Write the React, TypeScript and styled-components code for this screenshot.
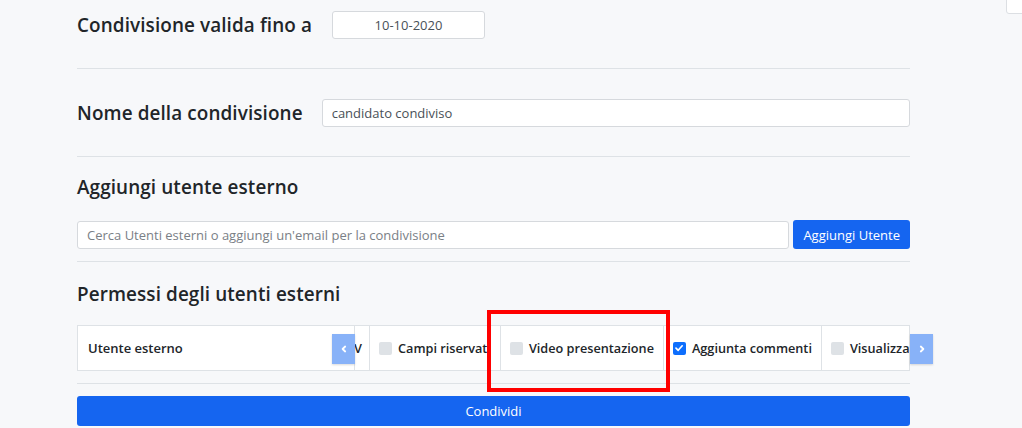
import * as React from "react";
import styled, { createGlobalStyle } from "styled-components";

const GlobalStyle = createGlobalStyle`
  html, body {
    margin: 0;
    padding: 0;
    background: #f7f8fa;
    font-family: "Open Sans", "Liberation Sans", sans-serif;
    color: #212529;
  }
`;

/// Styles

const Page = styled.div`
  position: relative;
  width: 1022px;
  height: 428px;
  overflow: hidden;
  box-sizing: border-box;
  padding: 0 112px 0 77px;
`;

const Section = styled.div<{ $top: number; $bottom: number; $last?: boolean }>`
  display: flex;
  flex-direction: column;
  padding-top: ${p => p.$top}px;
  padding-bottom: ${p => p.$bottom}px;
  border-bottom: ${p => (p.$last ? "none" : "1px solid #dee2e6")};
`;

const Row = styled.div<{ $gap: number; $top?: number }>`
  display: flex;
  align-items: center;
  gap: ${p => p.$gap}px;
  margin-top: ${p => p.$top || 0}px;
`;

const Heading = styled.h2`
  margin: 0;
  font-size: 18.9px;
  font-weight: 600;
  line-height: 27px;
  white-space: nowrap;
  letter-spacing: 0.1px;
`;

const Input = styled.input<{ $width?: number; $center?: boolean }>`
  box-sizing: border-box;
  height: 28px;
  ${p => (p.$width ? `width: ${p.$width}px;` : "flex: 1;")}
  min-width: 0;
  padding: 0 9px;
  border: 1px solid #d6d9dd;
  border-radius: 3px;
  background: #fff;
  font-family: inherit;
  font-size: 13px;
  color: #495057;
  text-align: ${p => (p.$center ? "center" : "left")};
  &::placeholder {
    color: #7a8086;
  }
`;

const BlueButton = styled.button<{ $full?: boolean }>`
  box-sizing: border-box;
  height: ${p => (p.$full ? 30 : 29)}px;
  ${p => (p.$full ? "width: 100%;" : "padding: 0 10px;")}
  border: none;
  border-radius: 3px;
  background: #1565f0;
  color: #fff;
  font-family: inherit;
  font-size: 13px;
  font-weight: 500;
  white-space: nowrap;
`;

const TableWrap = styled.div`
  position: relative;
  margin-top: 17px;
  display: flex;
  height: 46px;
  box-sizing: border-box;
  border: 1px solid #dee2e6;
  background: #fff;
`;

const StickyCell = styled.div`
  flex: 0 0 277px;
  box-sizing: border-box;
  display: flex;
  align-items: center;
  padding-left: 10px;
  border-right: 1px solid #dee2e6;
  font-size: 13px;
  font-weight: 600;
  background: #fff;
`;

const Track = styled.div`
  flex: 1;
  display: flex;
  overflow: hidden;
`;

const Cell = styled.div<{ $clip?: number }>`
  flex: 0 0 auto;
  box-sizing: border-box;
  display: flex;
  align-items: center;
  gap: 6px;
  white-space: nowrap;
  font-size: 12.7px;
  font-weight: 600;
  border-right: 1px solid #dee2e6;
  ${p =>
    p.$clip
      ? `width: ${p.$clip}px; justify-content: flex-end; overflow: hidden; padding-right: 7px;`
      : "padding: 0 9px 0 9px;"}
`;

const Check = styled.span<{ $on?: boolean }>`
  flex: 0 0 13px;
  width: 13px;
  height: 13px;
  border-radius: 2px;
  background: ${p => (p.$on ? "#0d6efd" : "#dee2e6")};
  display: flex;
  align-items: center;
  justify-content: center;
`;

const ScrollArrow = styled.div<{ $side: "left" | "right" }>`
  position: absolute;
  top: 8px;
  ${p => (p.$side === "left" ? "left: 254px;" : "right: -24px;")}
  width: 23px;
  height: 30px;
  background: #88b2f8;
  display: flex;
  align-items: center;
  justify-content: center;
  box-shadow: 0 1px 2px rgba(0, 0, 0, 0.15);
`;

const Annotation = styled.div`
  position: absolute;
  left: 487px;
  top: 310px;
  width: 183px;
  height: 82px;
  box-sizing: border-box;
  border: 4px solid #ff0000;
  pointer-events: none;
`;

const CornerTab = styled.div`
  position: absolute;
  right: -4px;
  top: -4px;
  width: 18px;
  height: 16px;
  background: #fff;
  border: 1px solid #dcdfe3;
  border-radius: 3px;
`;

/// Component

const Chevron: React.FunctionComponent<{ dir: "left" | "right" }> = ({ dir }) => (
  <svg width="8" height="8" viewBox="0 0 8 8">
    <path
      d={dir === "left" ? "M5.2 1.5 L2.6 4 L5.2 6.5" : "M2.8 1.5 L5.4 4 L2.8 6.5"}
      fill="none"
      stroke="#fff"
      strokeWidth="1.8"
      strokeLinecap="round"
      strokeLinejoin="round"
    />
  </svg>
);

const Tick = () => (
  <svg width="10" height="10" viewBox="0 0 10 10">
    <path d="M2 5.2 L4.2 7.3 L8.2 2.8" fill="none" stroke="#fff" strokeWidth="1.7" strokeLinecap="round" strokeLinejoin="round" />
  </svg>
);

const permissions = [
  { label: "Campi riservati", on: false },
  { label: "Video presentazione", on: false },
  { label: "Aggiunta commenti", on: true },
  { label: "Visualizzazione note", on: false }
];

export default function App() {
  return (
    <>
      <GlobalStyle />
      <Page>
        <CornerTab />
        <Section $top={11} $bottom={29}>
          <Row $gap={20}>
            <Heading>Condivisione valida fino a</Heading>
            <Input $width={153} $center defaultValue="10-10-2020" />
          </Row>
        </Section>
        <Section $top={30} $bottom={29}>
          <Row $gap={19}>
            <Heading>Nome della condivisione</Heading>
            <Input defaultValue="candidato condiviso" />
          </Row>
        </Section>
        <Section $top={17} $bottom={12}>
          <Heading>Aggiungi utente esterno</Heading>
          <Row $gap={4} $top={19}>
            <Input placeholder="Cerca Utenti esterni o aggiungi un'email per la condivisione" />
            <BlueButton>Aggiungi Utente</BlueButton>
          </Row>
        </Section>
        <Section $top={19} $bottom={12}>
          <Heading>Permessi degli utenti esterni</Heading>
          <TableWrap>
            <StickyCell>Utente esterno</StickyCell>
            <Track>
              <Cell $clip={15}>
                <Check />
                Scarica CV
              </Cell>
              {permissions.map(p => (
                <Cell key={p.label}>
                  <Check $on={p.on}>{p.on && <Tick />}</Check>
                  {p.label}
                </Cell>
              ))}
            </Track>
            <ScrollArrow $side="left">
              <Chevron dir="left" />
            </ScrollArrow>
            <ScrollArrow $side="right">
              <Chevron dir="right" />
            </ScrollArrow>
          </TableWrap>
        </Section>
        <Section $top={12} $bottom={0} $last>
          <BlueButton $full>Condividi</BlueButton>
        </Section>
        <Annotation />
      </Page>
    </>
  );
}
